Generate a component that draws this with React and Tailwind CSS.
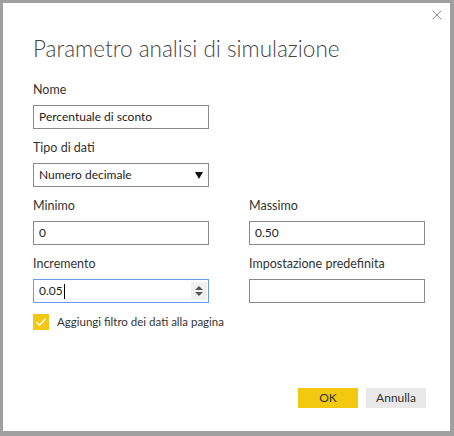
import { X } from "lucide-react";

const font = { fontFamily: 'Lato, "Open Sans", sans-serif' };

function Field({ label, children }) {
  return (
    <div className="flex flex-col">
      <label className="text-[12.5px] leading-[18px] text-[#333] mb-[6px]">{label}</label>
      {children}
    </div>
  );
}

function Box({ value, active, children }) {
  return (
    <div
      className={`relative flex items-center h-[24px] w-[176px] border ${active ? "border-[#6b9ce6]" : "border-[#8a8a8a]"} px-[5px] text-[12px] text-[#222] bg-white`}
    >
      <span>{value}</span>
      {children}
    </div>
  );
}

export default function App() {
  return (
    <div
      style={font}
      className="w-[454px] h-[436px] bg-white border-[#a0a0a0] border-t-[3px] border-l-[3px] border-r-[4px] border-b-[5px] flex flex-col relative"
    >
      <button className="absolute right-[5px] top-[4px] text-[#707070]">
        <X size={16} strokeWidth={1.2} />
      </button>

      <div className="pl-[30px] pr-[25px] pt-[30px] flex flex-col">
        <h1 className="text-[22.5px] font-light text-[#444] leading-[32px]">
          Parametro analisi di simulazione
        </h1>

        <div className="mt-[16px] flex flex-col gap-[10px]">
          <Field label="Nome">
            <Box value="Percentuale di sconto" />
          </Field>
          <Field label="Tipo di dati">
            <Box value="Numero decimale">
              <span className="absolute right-[5px] top-[8px] w-0 h-0 border-l-[4px] border-r-[4px] border-t-[7px] border-l-transparent border-r-transparent border-t-[#111]" />
            </Box>
          </Field>
          <div className="grid grid-cols-[176px_176px] gap-x-[40px] gap-y-[10px]">
            <Field label="Minimo">
              <Box value="0" />
            </Field>
            <Field label="Massimo">
              <Box value="0.50" />
            </Field>
            <Field label="Incremento">
              <Box value="0.05" active>
                <span className="w-px h-[15px] bg-black ml-[1px]" />
                <span className="absolute right-[1px] top-[2px] w-[16px] h-[18px] bg-[#f0f0f0] flex flex-col items-center justify-center gap-[2px]">
                  <span className="w-0 h-0 border-l-[4px] border-r-[4px] border-b-[4px] border-l-transparent border-r-transparent border-b-[#555]" />
                  <span className="w-0 h-0 border-l-[4px] border-r-[4px] border-t-[4px] border-l-transparent border-r-transparent border-t-[#555]" />
                </span>
              </Box>
            </Field>
            <Field label="Impostazione predefinita">
              <Box value="" />
            </Field>
          </div>
        </div>

        <div className="mt-[10px] flex items-center gap-[8px]">
          <span className="w-[16px] h-[16px] bg-[#f2c811] flex items-center justify-center">
            <svg width="12" height="12" viewBox="0 0 12 12" fill="none">
              <path d="M1.5 6.2 L4.5 9.2 L10.5 2.8" stroke="#ffffff" strokeWidth="1.3" />
            </svg>
          </span>
          <span className="text-[11.5px] text-[#333]">Aggiungi filtro dei dati alla pagina</span>
        </div>
      </div>

      <div className="mt-auto mb-[23px] pr-[24px] flex justify-end gap-[8px]">
        <button className="w-[60px] h-[20px] bg-[#f2c811] text-[12px] text-[#333] leading-[20px]">OK</button>
        <button className="w-[60px] h-[20px] bg-[#e8e8e8] text-[12px] text-[#333] leading-[20px]">Annulla</button>
      </div>
    </div>
  );
}
